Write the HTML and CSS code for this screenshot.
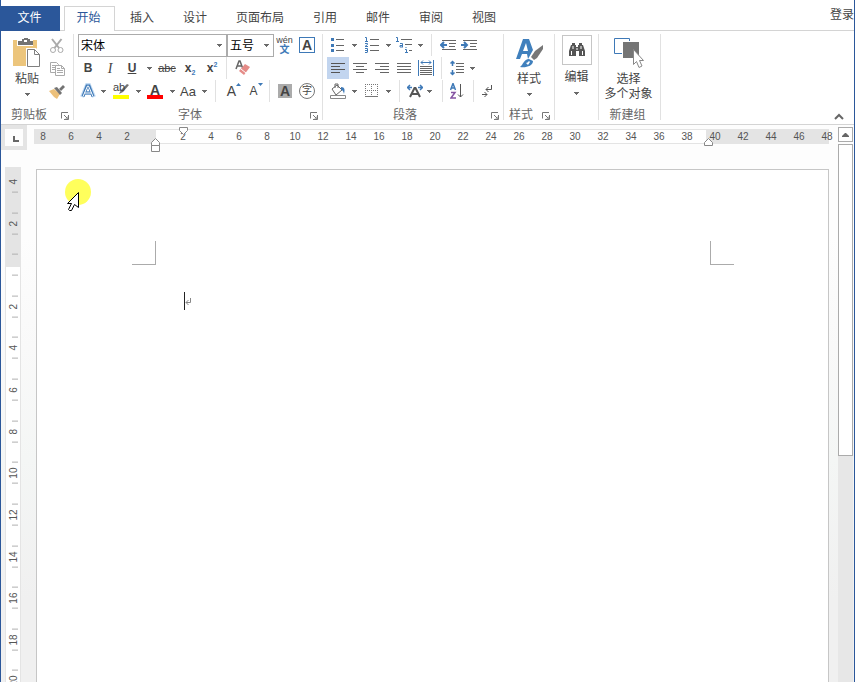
FILE: index.html
```html
<!DOCTYPE html>
<html lang="zh-CN">
<head>
<meta charset="utf-8">
<title>文档</title>
<link rel="stylesheet" href="styles.css">
</head>
<body>
<svg class="defs" aria-hidden="true">
  <symbol id="caret" viewBox="0 0 5 3"><path d="M0 0h5v1h-1v1h-1v1h-1v-1h-1v-1h-1z" fill="#6a6a6a"/></symbol>
  <symbol id="launcher" viewBox="0 0 8 8"><path d="M.5 6.500V.5H7M3 3l3 3M7.500 3v4.500H3M7 4.500V7H4.500" fill="none" stroke="#777"/></symbol>
</svg>
<div class="app">
  <nav class="tabs">
    <a class="tab file" href="#">文件</a>
    <a class="tab active" href="#">开始</a>
    <a class="tab" href="#">插入</a>
    <a class="tab" href="#">设计</a>
    <a class="tab" href="#">页面布局</a>
    <a class="tab" href="#">引用</a>
    <a class="tab" href="#">邮件</a>
    <a class="tab" href="#">审阅</a>
    <a class="tab" href="#">视图</a>
    <a class="login" href="#">登录</a>
  </nav>

  <header class="ribbon">
    <section class="group clipboard">
      <div class="tools clipboard-tools">
        <button class="big">
          <svg width="28" height="30" viewBox="0 0 28 30"><path d="M0 2h24v26H0z" fill="#ecc57c"/><path d="M4 1h16v7H4z" fill="#fff"/><path d="M5 7V3h4V1h2V0h4v1h2v2h3v4z" fill="#737373"/><path d="M11 2h3v2h-3z" fill="#fff"/><path d="M13 10h10l5 5v15H13z" fill="#fff"/><path d="M14.500 11.500h7l5 5v12h-12zM21.500 11.500v5h5" fill="#fff" stroke="#808080"/></svg>
          <span>粘贴</span>
          <svg class="caret"><use href="#caret"/></svg>
        </button>
        <div class="stack">
          <button aria-label="剪切"><svg width="16" height="16" viewBox="0 0 16 16" fill="none" stroke="#aaa"><path d="M3 1l7 9M12.500 1l-7 9" stroke-width="2"/><circle cx="4" cy="12" r="2.500"/><circle cx="11.500" cy="12" r="2.500"/></svg></button>
          <button aria-label="复制"><svg width="16" height="16" viewBox="0 0 16 16" fill="#fff" stroke="#aaa"><path d="M1.500 1.500h6l2 2v8h-8zM3 4.500h4M3 6.500h4M3 8.500h4"/><path d="M6.500 4.500h6l3 3v7h-9zM12.500 4.500v3h3M8 7.500h3M8 9.500h6M8 11.500h6"/></svg></button>
          <button aria-label="格式刷"><svg width="16" height="16" viewBox="0 0 16 16"><path d="M0 7l5-2 6 5-3 5-3-2z" fill="#ecc07a"/><path d="M5 4l3-1 5 6-2 2z" fill="#737373"/><path d="M10 5l4-4 2 2-4 4z" fill="#737373"/></svg></button>
        </div>
      </div>
      <footer><span>剪贴板</span><button class="launch" aria-label="剪贴板选项"><svg><use href="#launcher"/></svg></button></footer>
    </section>

    <section class="group font">
      <div class="tools">
        <div class="row font-1">
          <label class="combo"><select aria-label="字体"><option>宋体</option></select><svg class="caret"><use href="#caret"/></svg></label>
          <label class="combo size"><select aria-label="字号"><option>五号</option></select><svg class="caret"><use href="#caret"/></svg></label>
          <button class="phonetic" aria-label="拼音指南"><span>wén</span><b>文</b></button>
          <button class="boxed" aria-label="字符边框"><b>A</b></button>
        </div>
        <div class="row font-2">
          <button class="bold">B</button>
          <button class="italic">I</button>
          <button class="underline">U</button>
          <button aria-label="下划线样式"><svg class="caret"><use href="#caret"/></svg></button>
          <button class="strike">abc</button>
          <button class="script">x<sub>2</sub></button>
          <button class="script">x<sup>2</sup></button>
          <i class="sep"></i>
          <button aria-label="清除格式"><svg width="16" height="16" viewBox="0 0 16 16"><path d="M1 9L4 1h1l3 8M2 6h5" fill="none" stroke="#666" stroke-width="1.500"/><path d="M10 4l5 3-6 8-5-4z" fill="#e58c88"/><path d="M6 9l5 4" stroke="#fff"/></svg></button>
        </div>
        <div class="row font-3">
          <button aria-label="文本效果"><svg width="16" height="16" viewBox="0 0 16 16"><path d="M2 14L7 2h2l5 12M4.500 10h7" fill="none" stroke="#c3dbf3" stroke-width="4"/><path d="M3 13.500L7 3h2l4 10.500M4.500 10h7" fill="none" stroke="#3e79b7" stroke-width="3"/><path d="M3 13.500L7.500 3h1L13 13.500M4.500 10h7" fill="none" stroke="#fff"/></svg></button>
          <button aria-label="文本效果菜单"><svg class="caret"><use href="#caret"/></svg></button>
          <button class="highlight" aria-label="突出显示"><span>ab</span><svg width="16" height="18" viewBox="0 0 16 18"><path d="M6 12l2-4 6-6 2 1-6 7z" fill="#737373"/><path d="M0 13h16v4H0z" fill="#ff0"/></svg></button>
          <button aria-label="突出显示颜色"><svg class="caret"><use href="#caret"/></svg></button>
          <button class="color" aria-label="字体颜色"><b>A</b></button>
          <button aria-label="选择字体颜色"><svg class="caret"><use href="#caret"/></svg></button>
          <button class="case">Aa</button>
          <button aria-label="更改大小写"><svg class="caret"><use href="#caret"/></svg></button>
          <i class="sep"></i>
          <button class="grow" aria-label="增大字号">A<svg width="5" height="3" viewBox="0 0 5 3"><path d="M0 3L2.500 0 5 3z" fill="#3e79b7"/></svg></button>
          <button class="grow shrink" aria-label="减小字号">A<svg width="5" height="3" viewBox="0 0 5 3"><path d="M0 0h5L2.500 3z" fill="#3e79b7"/></svg></button>
          <i class="sep"></i>
          <button class="shaded" aria-label="字符底纹"><b>A</b></button>
          <button class="circled" aria-label="带圈字符"><span>字</span></button>
        </div>
      </div>
      <footer><span>字体</span><button class="launch" aria-label="字体选项"><svg><use href="#launcher"/></svg></button></footer>
    </section>

    <section class="group paragraph">
      <div class="tools">
        <div class="row para-1">
          <button aria-label="项目符号"><svg width="14" height="16" viewBox="0 0 14 16"><path d="M0 1h3v3H0zM0 7h3v3H0zM0 12h3v3H0z" fill="#3e79b7"/><path d="M5 2.500h8M5 8.500h8M5 13.500h8" stroke="#666"/></svg></button>
          <button aria-label="项目符号库"><svg class="caret"><use href="#caret"/></svg></button>
          <button aria-label="编号"><svg width="16" height="16" viewBox="0 0 16 16" fill="none"><path d="M1 .5h1.500V4M1 4.500h3M1 6.500h2.500v1L1 9.500h3M1 11.500h2.500V15M1 13.500h2M1 15.500h2.500" stroke="#3e79b7"/><path d="M6 2.500h9M6 8.500h9M6 13.500h9" stroke="#666"/></svg></button>
          <button aria-label="编号库"><svg class="caret"><use href="#caret"/></svg></button>
          <button aria-label="多级列表"><svg width="18" height="16" viewBox="0 0 18 16" fill="none"><path d="M1 .5h1.500V4M1 4.500h3M5 6.500h2.500V10M7.500 8.500H5v1.500h3M11 10v1M10 12.500h1.500V16M10 15.500h3" stroke="#3e79b7"/><path d="M6 2.500h11M10 7.500h7M14 13.500h3" stroke="#666"/></svg></button>
          <button aria-label="多级列表库"><svg class="caret"><use href="#caret"/></svg></button>
          <i class="sep"></i>
          <button aria-label="减少缩进量"><svg width="16" height="12" viewBox="0 0 16 12"><path d="M2 1.500h14M9 4.500h7M9 7.500h6M2 10.500h14" stroke="#666"/><path d="M7 6H2M4 3L1 6l3 3" fill="none" stroke="#3e79b7" stroke-width="2"/></svg></button>
          <button aria-label="增加缩进量"><svg width="16" height="12" viewBox="0 0 16 12"><path d="M2 1.500h14M9 4.500h7M9 7.500h6M2 10.500h14" stroke="#666"/><path d="M0 6h6M3 3l3 3-3 3" fill="none" stroke="#3e79b7" stroke-width="2"/></svg></button>
        </div>
        <div class="row para-2">
          <button class="on" aria-label="左对齐"><svg width="14" height="12" viewBox="0 0 14 12" stroke="#555"><path d="M0 1.500h14M0 4.500h9M0 7.500h14M0 10.500h9"/></svg></button>
          <button aria-label="居中"><svg width="14" height="12" viewBox="0 0 14 12" stroke="#666"><path d="M0 1.500h14M3 4.500h8M0 7.500h14M3 10.500h8"/></svg></button>
          <button aria-label="右对齐"><svg width="14" height="12" viewBox="0 0 14 12" stroke="#666"><path d="M0 1.500h14M5 4.500h9M0 7.500h14M5 10.500h9"/></svg></button>
          <button aria-label="两端对齐"><svg width="14" height="12" viewBox="0 0 14 12" stroke="#666"><path d="M0 1.500h14M0 4.500h14M0 7.500h14M0 10.500h14"/></svg></button>
          <button aria-label="分散对齐"><svg width="16" height="16" viewBox="0 0 16 16" fill="none"><path d="M2 6.500h12M2 8.500h12M2 10.500h12M2 12.500h12M2 14.500h12" stroke="#666"/><path d="M.5 0v16M15.500 0v16M3 2.500h10M5 .5l-2 2 2 2M11 .5l2 2-2 2" stroke="#3e79b7"/></svg></button>
          <i class="sep"></i>
          <button aria-label="行距"><svg width="14" height="16" viewBox="0 0 14 16" fill="none"><path d="M6 3.500h8M6 6.500h8M6 9.500h8M6 12.500h8" stroke="#666"/><path d="M2.500 1v5M2.500 10v5M.5 3.500l2-2 2 2M.5 12.500l2 2 2-2" stroke="#3e79b7" stroke-width="1.500"/></svg></button>
          <button aria-label="行距选项"><svg class="caret"><use href="#caret"/></svg></button>
        </div>
        <div class="row para-3">
          <button aria-label="底纹"><svg width="18" height="16" viewBox="0 0 18 16" fill="none"><path d="M3 6l5-4 5 5-6 5zM6 5V1h3v4" stroke="#666"/><path d="M12 4c4 0 4 3 3 7-1-3-1-4-3-4z" fill="#3e79b7"/><path d="M1.500 12.500h15v3h-15z" fill="#fff" stroke="#888"/></svg></button>
          <button aria-label="底纹颜色"><svg class="caret"><use href="#caret"/></svg></button>
          <button aria-label="边框"><svg width="14" height="14" viewBox="0 0 14 14" fill="none" stroke="#777" stroke-dasharray="1 1"><path d="M0 .5h13M0 6.500h13M.5 0v13M6.500 0v13M12.500 0v13"/><path d="M0 12.500h13" stroke-dasharray="none"/></svg></button>
          <button aria-label="边框样式"><svg class="caret"><use href="#caret"/></svg></button>
          <i class="sep"></i>
          <button aria-label="中文版式"><svg width="16" height="14" viewBox="0 0 16 14" fill="none"><path d="M3 13L7.500 4h1L13 13M5 10h6" stroke="#555" stroke-width="2"/><path d="M0 3.500h5M3 1L.5 3.500 3 6M16 3.500h-5M13 1l2.500 2.500L13 6" stroke="#3e79b7" stroke-width="1.500"/></svg></button>
          <button aria-label="中文版式菜单"><svg class="caret"><use href="#caret"/></svg></button>
          <i class="sep"></i>
          <button aria-label="排序"><svg width="14" height="16" viewBox="0 0 14 16" fill="none"><path d="M.5 7L3 .5 5.500 7M1.500 5h3" stroke="#3e79b7" stroke-width="1.500"/><path d="M1 9.500h4L1 15h5" stroke="#8655a3" stroke-width="1.500"/><path d="M10.500 1v13M8 11.500l2.500 2.500 2.500-2.500" stroke="#555"/></svg></button>
          <i class="sep"></i>
          <button aria-label="显示编辑标记"><svg width="12" height="14" viewBox="0 0 12 14" fill="none" stroke="#555"><path d="M9.500 1v4.500H4M6.500 3L4 5.500 6.500 8M0 10.500h5M2.500 8L5 10.500 2.500 13"/></svg></button>
        </div>
      </div>
      <footer><span>段落</span><button class="launch" aria-label="段落选项"><svg><use href="#launcher"/></svg></button></footer>
    </section>

    <section class="group styles">
      <div class="tools">
        <button class="big">
          <svg width="28" height="30" viewBox="0 0 28 30"><path fill-rule="evenodd" d="M1 21L8 1h6l4 11-5 9-1-5H7l-2 5zM8 13h5l-2-8z" fill="#4080bd"/><path d="M16 19l4-6 8-6v4l-6 9-3 2z" fill="#777"/><path d="M5 29c3-2 4-8 9-8l4 2c0 5-7 7-13 6z" fill="#4080bd"/><path d="M11 25c1 0 2-1 3-2l1 1-2 3z" fill="#fff"/></svg>
          <span>样式</span>
          <svg class="caret"><use href="#caret"/></svg>
        </button>
      </div>
      <footer><span>样式</span><button class="launch" aria-label="样式选项"><svg><use href="#launcher"/></svg></button></footer>
    </section>

    <section class="group edit">
      <div class="tools">
        <button class="big">
          <span class="frame"><svg width="16" height="14" viewBox="0 0 16 14"><path d="M3 0h3v2h1v2h2V2h1V0h3v2h1l2 6v5h-6V8H7v5H0V8l2-6h1z" fill="#555"/><path d="M4 3v3M12 3v3M2.500 8v4M13.500 8v4M8 5v2" stroke="#fff"/></svg></span>
          <span>编辑</span>
          <svg class="caret"><use href="#caret"/></svg>
        </button>
      </div>
    </section>

    <section class="group custom">
      <div class="tools">
        <button class="big">
          <svg width="30" height="30" viewBox="0 0 30 30"><path d="M.5.5h15v15H.5z" fill="#fff" stroke="#3e79b7"/><path d="M8 3h18v17H8z" fill="#fff"/><path d="M9 4h16v16H9z" fill="#757575"/><path d="M19.500 11.500v15l3-3 2.500 6 3-1.500-2.500-5.500h4z" fill="#fff" stroke="#888"/></svg>
          <span>选择<br>多个对象</span>
        </button>
      </div>
      <footer><span>新建组</span></footer>
    </section>
    <button class="collapse" aria-label="折叠功能区"><svg width="10" height="7" viewBox="0 0 10 7"><path d="M1 6l4-4 4 4" fill="none" stroke="#666" stroke-width="2"/></svg></button>
  </header>

  <main class="workspace">
    <div class="canvas">
      <div class="ruler-bar">
        <button class="tab-stop" aria-label="制表符"><svg width="6" height="6" viewBox="0 0 6 6"><path d="M1 0v5h5" fill="none" stroke="#666" stroke-width="2"/></svg></button>
        <div class="ruler">
          <div class="numbers"><span>8</span><span>6</span><span>4</span><span>2</span><span></span><span>2</span><span>4</span><span>6</span><span>8</span><span>10</span><span>12</span><span>14</span><span>16</span><span>18</span><span>20</span><span>22</span><span>24</span><span>26</span><span>28</span><span>30</span><span>32</span><span>34</span><span>36</span><span>38</span><span>40</span><span>42</span><span>44</span><span>46</span><span>48</span></div>
          <svg class="marker first" width="9" height="8" viewBox="0 0 9 8"><path d="M.5.5h8v3l-4 4-4-4z" fill="#fff" stroke="#888"/></svg>
          <svg class="marker left" width="9" height="14" viewBox="0 0 9 14"><path d="M.5 7.500v-3l4-4 4 4v3zM.5 7.500h8v6h-8z" fill="#fff" stroke="#888"/></svg>
          <svg class="marker right" width="9" height="8" viewBox="0 0 9 8"><path d="M.5 7.500v-3l4-4 4 4v3z" fill="#fff" stroke="#888"/></svg>
        </div>
      </div>
      <div class="document">
        <div class="v-ruler">
          <div class="v-numbers"><span>4</span><span>2</span><span></span><span>2</span><span>4</span><span>6</span><span>8</span><span>10</span><span>12</span><span>14</span><span>16</span><span>18</span><span>20</span></div>
        </div>
        <article class="page">
          <div class="corners"><i></i><i></i></div>
          <p class="line"><svg width="8" height="18" viewBox="0 0 8 18" fill="none"><path d="M.5 0v18" stroke="#222"/><path d="M6.500 6v4.500H2M4.500 8L2 10.500 4.500 13" stroke="#888"/></svg></p>
          <svg class="pointer" width="28" height="34" viewBox="0 0 28 34"><circle cx="14" cy="13" r="13" fill="#ffff5c"/><path d="M14.500 13.500v15l-4-3-3 6h-2l-1-1 3-6H3.500z" fill="#fff" stroke="#000"/></svg>
        </article>
      </div>
    </div>
    <div class="scrollbar">
      <button aria-label="向上滚动"><svg width="7" height="4" viewBox="0 0 7 4"><path d="M3 0h1l3 3v1H0V3z" fill="#666"/></svg></button>
      <div class="track"><div class="thumb"></div></div>
    </div>
  </main>
</div>
</body>
</html>
```
FILE: styles.css
```css
* { box-sizing: border-box; }

body {
  margin: 0;
  background: #fff;
  color: #444;
  font: 12px/15px "Liberation Sans", "Noto Sans CJK SC", sans-serif;
}

a { color: inherit; text-decoration: none; }
svg { display: block; flex: none; }

button {
  display: flex;
  align-items: center;
  justify-content: center;
  padding: 0;
  border: 0;
  background: none;
  color: inherit;
  font: inherit;
}

.defs { position: absolute; width: 0; height: 0; }
.caret { width: 5px; height: 3px; }

.app {
  display: flex;
  flex-direction: column;
  height: 100vh;
  overflow: hidden;
  border: solid #2b579a;
  border-width: 0 1px;
}

/* Tabs */
.tabs {
  display: flex;
  flex: none;
  height: 31px;
  padding-top: 6px;
  border-bottom: 1px solid #d4d4d4;
}

.tab {
  padding: 5px 14px 0 15px;
  height: 25px;
}

.tab.file {
  width: 59px;
  margin-right: 4px;
  padding: 5px 2px 0 0;
  background: #2b579a;
  color: #fff;
  text-align: center;
}

.tab.active {
  width: 51px;
  padding: 4px 2px 0 0;
  border: 1px solid #d4d4d4;
  border-bottom: 0;
  background: #fff;
  color: #2b579a;
  text-align: center;
}

.login { margin-left: auto; padding-top: 2px; }

/* Ribbon */
.ribbon {
  display: flex;
  flex: none;
  height: 94px;
  padding-top: 3px;
  border-bottom: 1px solid #d4d4d4;
}

.group {
  display: flex;
  flex-direction: column;
  height: 86px;
  border-right: 1px solid #e1e1e1;
}

.clipboard { width: 73px; }
.font { width: 249px; }
.paragraph { width: 181px; }
.styles { width: 51px; }
.edit { width: 44px; }
.custom { width: 62px; }

.tools { flex: none; height: 69px; }
.font .tools { padding-left: 3px; }
.paragraph .tools { padding-left: 4px; }

.group footer {
  display: flex;
  flex: none;
  align-items: center;
  height: 21px;
  padding: 3px 4px 0 0;
  color: #666;
}

.group footer span { flex: 1; padding: 1px 4px 0 0; text-align: center; white-space: nowrap; }
.launch { padding-top: 2px; }
.launch svg { width: 8px; height: 8px; }
.group.custom footer { padding-right: 0; }

.big {
  flex-direction: column;
  justify-content: flex-start;
  gap: 4px;
  width: 100%;
  padding-top: 4px;
  white-space: nowrap;
}

.big .caret { margin-top: 2px; }
.custom .big { padding-right: 2px; }
.edit .big { gap: 5px; padding-top: 1px; }

.frame {
  display: grid;
  place-items: center;
  width: 30px;
  height: 30px;
  border: 1px solid #c6c6c6;
}

.clipboard-tools { display: flex; }
.clipboard .big { width: 48px; padding-left: 4px; }
.stack { display: grid; grid-template-rows: repeat(3, 23px); }
.stack button { width: 16px; }

.row {
  display: grid;
  height: 23px;
}

.row > * { min-width: 0; }
.row button { height: 22px; }

.sep {
  justify-self: center;
  width: 1px;
  height: 22px;
  background: #e1e1e1;
}

.font-1 { grid-template-columns: 149px 47px 21px 24px; padding-left: 1px; }
.font-2 { grid-template-columns: 22px 22px 22px 12px 24px 22px 22px 6px 28px; }
.font-3 { grid-template-columns: 22px 8px 28px 6px 28px 6px 26px 6px 16px 22px 22px 5px 26px 18px; }
.para-1 { grid-template-columns: 22px 10px 26px 6px 26px 6px 16px 18px 24px; }
.para-2 { grid-template-columns: repeat(5, 22px) 9px 22px 8px; }
.para-3 { grid-template-columns: 22px 10px 26px 6px 16px 16px 12px 14px 16px 16px 14px; }

.combo {
  display: flex;
  align-items: center;
  height: 23px;
  padding-right: 4px;
  border: 1px solid #ababab;
}

.combo select {
  flex: 1;
  min-width: 0;
  height: 21px;
  padding: 2px 0 0 2px;
  border: 0;
  appearance: none;
  background: none;
  color: #000;
  font: inherit;
}

.phonetic { flex-direction: column; font-size: 9px; line-height: 10px; }
.phonetic b { color: #3e79b7; font-size: 10px; font-weight: 700; }

.boxed b {
  width: 16px;
  height: 16px;
  border: 1px solid #3e79b7;
  font-size: 14px;
  line-height: 14px;
}

.bold { font-weight: bold; }
.italic { font-family: "Liberation Serif", serif; font-size: 14px; font-style: italic; }
.underline { font-weight: bold; text-decoration: underline; }
.strike { font-size: 11px; text-decoration: line-through; }
.script { font-weight: bold; }
.script sub, .script sup { color: #3e79b7; font-size: 7px; line-height: 7px; }
.script sub { padding-top: 8px; vertical-align: baseline; }
.script sup { padding-bottom: 8px; vertical-align: baseline; }

.highlight { position: relative; }
.highlight span { position: absolute; top: 0; left: 6px; font-size: 11px; }

.color b {
  width: 16px;
  height: 15px;
  border-bottom: 4px solid #f00;
  font-size: 14px;
  line-height: 12px;
}

.case { font-size: 13px; }
.grow { font-size: 14px; }
.grow svg { align-self: flex-start; margin-top: 3px; }
.shrink { font-size: 12px; }

.shaded b {
  width: 14px;
  height: 14px;
  background: #ababab;
  font-size: 14px;
  line-height: 14px;
}

.circled span {
  width: 16px;
  height: 16px;
  border: 1px solid #777;
  border-radius: 50%;
  font-size: 10px;
  line-height: 13px;
}

.on { background: #c2d5ef; }

.collapse { align-self: flex-end; margin: 0 10px 4px auto; }

/* Workspace */
.workspace {
  display: flex;
  flex: 1;
  min-height: 0;
  background: linear-gradient(#fdfdfd, #fdfdfd 20%, #f9f9f9 40%, #f4f6f5 60%, #f0f0f0 85%);
}

.canvas {
  display: flex;
  flex: 1;
  flex-direction: column;
  min-width: 0;
}

.ruler-bar {
  display: flex;
  flex: none;
  height: 25px;
  margin-right: 9px;
}

.tab-stop {
  width: 26px;
  margin-right: 7px;
  border: 4px solid #e4e4e4;
  padding: 3px 0 0 3px;
}

.ruler {
  position: relative;
  flex: 1;
  min-width: 0;
  height: 15px;
  margin-top: 4px;
  border: solid #e4e4e4;
  border-width: 1px 0;
  background: linear-gradient(to right, #e4e4e4 122px, #fff 122px calc(100% - 123px), #e4e4e4 calc(100% - 123px));
}

.numbers {
  display: grid;
  grid-template-columns: repeat(29, 28px);
  margin-left: -5px;
  color: #555;
  font-size: 10px;
  line-height: 14px;
  text-align: center;
}

.marker { position: absolute; }
.marker.first { top: -3px; left: 145px; }
.marker.left { top: 8px; left: 117px; }
.marker.right { top: 8px; right: 116px; }

.document {
  display: flex;
  flex: 1;
  min-height: 0;
}

.v-ruler {
  flex: none;
  width: 16px;
  margin: 17px 15px 0 4px;
  overflow: hidden;
  border: solid #e4e4e4;
  border-width: 0 1px;
  background: linear-gradient(#e4e4e4 100px, #fff 100px);
}

.v-numbers {
  display: grid;
  grid-template-rows: repeat(13, 1fr);
  height: 541px;
  margin-top: -6px;
  color: #555;
  font-size: 10px;
  line-height: 12px;
}

.v-numbers span {
  display: flex;
  align-items: center;
  justify-content: center;
  padding-right: 2px;
  writing-mode: vertical-rl;
  transform: rotate(180deg);
  background:
    linear-gradient(#b0b0b0, #b0b0b0) 2px 10px / 6px 1px no-repeat,
    linear-gradient(#b0b0b0, #b0b0b0) 2px 31px / 6px 1px no-repeat;
}

.v-numbers span:first-child {
  background: linear-gradient(#b0b0b0, #b0b0b0) 2px 10px / 6px 1px no-repeat;
}

.page {
  position: relative;
  flex: 1;
  min-width: 0;
  margin: 19px 9px 0 0;
  padding: 71px 94px 0 95px;
  border: 1px solid #c6c6c6;
  border-bottom: 0;
  background: #fff;
}

.corners { display: flex; justify-content: space-between; }

.corners i {
  width: 24px;
  height: 24px;
  border: solid #ababab;
  border-width: 0 1px 1px 0;
}

.corners i + i { border-width: 0 0 1px 1px; }

.line { margin: 27px 0 0 52px; }

.pointer { position: absolute; top: 9px; left: 27px; }

.scrollbar {
  display: flex;
  flex: none;
  flex-direction: column;
  gap: 2px;
  width: 16px;
  padding: 2px 1px 0 0;
}

.scrollbar button {
  height: 15px;
  border: 1px solid #ababab;
  background: #fff;
}

.track { flex: 1; background: #e7e7e7; }

.thumb {
  height: 58%;
  border: 1px solid #ababab;
  background: #fff;
}
```
